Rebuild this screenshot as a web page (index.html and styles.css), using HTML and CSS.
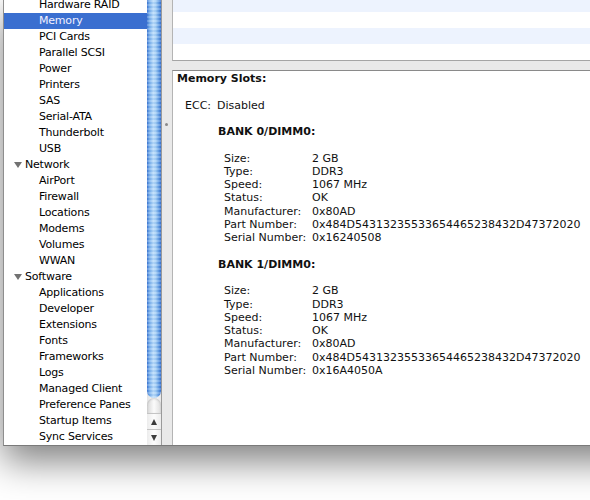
FILE: index.html
```html
<!DOCTYPE html>
<html lang="en">
<head>
    <meta charset="UTF-8">
    <title>System Information - Memory</title>
    <link rel="stylesheet" href="styles.css">
</head>
<body>
    <div class="window">
        <div class="sidebar">
            <ul class="source-list">
                <li class="item">Hardware RAID</li>
                <li class="item selected">Memory</li>
                <li class="item">PCI Cards</li>
                <li class="item">Parallel SCSI</li>
                <li class="item">Power</li>
                <li class="item">Printers</li>
                <li class="item">SAS</li>
                <li class="item">Serial-ATA</li>
                <li class="item">Thunderbolt</li>
                <li class="item">USB</li>
                <li class="group"><span class="disclosure"></span>Network</li>
                <li class="item">AirPort</li>
                <li class="item">Firewall</li>
                <li class="item">Locations</li>
                <li class="item">Modems</li>
                <li class="item">Volumes</li>
                <li class="item">WWAN</li>
                <li class="group"><span class="disclosure"></span>Software</li>
                <li class="item">Applications</li>
                <li class="item">Developer</li>
                <li class="item">Extensions</li>
                <li class="item">Fonts</li>
                <li class="item">Frameworks</li>
                <li class="item">Logs</li>
                <li class="item">Managed Client</li>
                <li class="item">Preference Panes</li>
                <li class="item">Startup Items</li>
                <li class="item">Sync Services</li>
            </ul>

            <div class="scrollbar">
                <div class="thumb"></div>
                <div class="track-end"></div>
                <div class="arrow up"><span></span></div>
                <div class="arrow down"><span></span></div>
            </div>
        </div>

        <div class="split-v"><span class="grip"></span></div>

        <div class="content">
            <div class="table">
                <div class="row"></div>
                <div class="row"></div>
                <div class="row"></div>
                <div class="row"></div>
            </div>

            <div class="split-h"></div>

            <div class="detail">
                <div class="heading">Memory Slots:</div>

                <div class="ecc">
                    <span>ECC:</span>
                    <span>Disabled</span>
                </div>

                <div class="bank">
                    <div class="bank-title">BANK 0/DIMM0:</div>
                    <div class="props">
                        <span>Size:</span><span>2 GB</span>
                        <span>Type:</span><span>DDR3</span>
                        <span>Speed:</span><span>1067 MHz</span>
                        <span>Status:</span><span>OK</span>
                        <span>Manufacturer:</span><span>0x80AD</span>
                        <span>Part Number:</span><span>0x484D54313235533654465238432D47372020</span>
                        <span>Serial Number:</span><span>0x16240508</span>
                    </div>
                </div>

                <div class="bank">
                    <div class="bank-title">BANK 1/DIMM0:</div>
                    <div class="props">
                        <span>Size:</span><span>2 GB</span>
                        <span>Type:</span><span>DDR3</span>
                        <span>Speed:</span><span>1067 MHz</span>
                        <span>Status:</span><span>OK</span>
                        <span>Manufacturer:</span><span>0x80AD</span>
                        <span>Part Number:</span><span>0x484D54313235533654465238432D47372020</span>
                        <span>Serial Number:</span><span>0x16A4050A</span>
                    </div>
                </div>
            </div>
        </div>
    </div>
</body>
</html>
```

FILE: styles.css
```css
body {
    margin: 0;
    background-color: #fff;
    font-family: 'DejaVu Sans', Verdana, sans-serif;
    font-size: 11px;
    color: #000;
    overflow: hidden;
    height: 500px;
}

.window {
    display: flex;
    width: 660px;
    height: 445px;
    margin-left: 3px;
    border-left: 1px solid #8e8e8e;
    border-bottom: 1px solid #7a7a7a;
    background-color: #fff;
    box-shadow: 0 15px 35px rgba(0, 0, 0, 0.5);
}

/* sidebar */

.sidebar {
    display: flex;
    height: 100%;
    overflow: hidden;
}

.source-list {
    list-style: none;
    margin: -3px 0 0 0;
    padding: 0;
    width: 143px;
    letter-spacing: -0.2px;
}

.source-list li {
    height: 16px;
    line-height: 16px;
    white-space: nowrap;
}

.item {
    padding-left: 35px;
}

.item.selected {
    background-color: #3a6fd0;
    color: #f1f0ff;
}

.group {
    display: flex;
    align-items: center;
    padding-left: 10px;
}

.disclosure {
    width: 0;
    height: 0;
    border-left: 4px solid transparent;
    border-right: 4px solid transparent;
    border-top: 6px solid #727272;
    margin-right: 3px;
}

.scrollbar {
    display: flex;
    flex-direction: column;
    width: 14px;
    border-right: 1px solid #9a9a9a;
    background: linear-gradient(to right, #e4e4e4, #f8f8f8 50%, #e9e9e9);
}

.thumb {
    flex: 1;
    border-radius: 0 0 7px 7px;
    background:
        repeating-linear-gradient(to bottom, rgba(255, 255, 255, 0.18) 0 2px, rgba(0, 60, 160, 0.05) 2px 4px),
        linear-gradient(to right, #3f78d2, #79b0ec 18%, #b9dcfb 45%, #a6d0f6 62%, #5f9ae2 85%, #3a72cc);
}

.track-end {
    height: 15px;
    border-radius: 7px 7px 0 0;
    background: linear-gradient(to right, #d6d6d6, #fbfbfb 50%, #dedede);
    box-shadow: inset 0 1px 2px rgba(0, 0, 0, 0.15);
}

.arrow {
    display: flex;
    align-items: center;
    justify-content: center;
    height: 16px;
    border-top: 1px solid #c4c4c4;
    box-sizing: border-box;
    background: linear-gradient(to right, #ececec, #fcfcfc 50%, #ececec);
}

.arrow span {
    width: 0;
    height: 0;
    border-left: 3.5px solid transparent;
    border-right: 3.5px solid transparent;
}

.arrow.up span {
    border-bottom: 6px solid #3c3c3c;
}

.arrow.down span {
    border-top: 6px solid #3c3c3c;
}

.split-v {
    position: relative;
    width: 10px;
    background-color: #e9e9e9;
}

.grip {
    position: absolute;
    top: 123px;
    left: 3px;
    width: 3px;
    height: 3px;
    border-radius: 50%;
    background-color: #8a8a8a;
}

/* right side */

.content {
    display: flex;
    flex-direction: column;
    flex: 1;
}

.table {
    height: 60px;
    overflow: hidden;
    border-left: 1px solid #b4b4b4;
    border-bottom: 1px solid #a5a5a5;
}

.row {
    height: 16px;
}

.row:first-child {
    margin-top: -4px;
}

.row:nth-child(odd) {
    background-color: #edf3fe;
}

.split-h {
    height: 9px;
    background-color: #e9e9e9;
}

.detail {
    flex: 1;
    border-top: 1px solid #8a8a8a;
    border-left: 1px solid #b4b4b4;
    padding: 1px 0 0 4px;
    line-height: 13.27px;
    color: #111;
}

.heading {
    font-weight: bold;
}

.ecc {
    display: grid;
    grid-template-columns: 32px auto;
    margin: 13.27px 0 0 8px;
}

.bank {
    margin: 13.27px 0 0 41px;
}

.bank-title {
    font-weight: bold;
}

.props {
    display: grid;
    grid-template-columns: 88px auto;
    margin: 13.27px 0 0 6px;
}
```
